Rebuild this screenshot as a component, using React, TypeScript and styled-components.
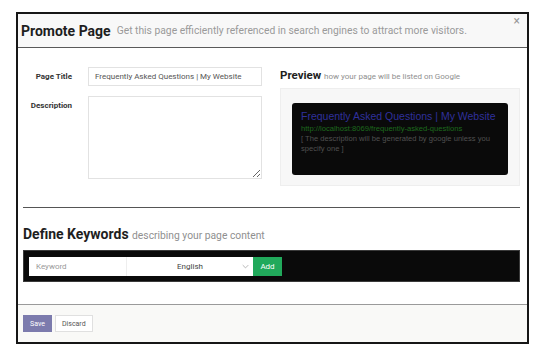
import { ReactElement } from 'react';
import styled, { createGlobalStyle } from 'styled-components';

const GlobalStyle = createGlobalStyle`
  body {
    margin: 0;
    background: #fff;
    font-family: Roboto, 'Liberation Sans', sans-serif;
  }
  #root {
    padding: 12px 0 0 16px;
  }
`;

function App(): ReactElement {
  return (
    <>
      <GlobalStyle />
      <Modal>
        <Header>
          <Title>Promote Page</Title>
          <Subtitle>Get this page efficiently referenced in search engines to attract more visitors.</Subtitle>
          <Close>×</Close>
        </Header>
        <Body>
          <TopSection>
            <FormColumn>
              <FieldRow>
                <Label>Page Title</Label>
                <TextInput defaultValue="Frequently Asked Questions | My Website" />
              </FieldRow>
              <FieldRow $top>
                <Label $top>Description</Label>
                <TextArea />
              </FieldRow>
            </FormColumn>
            <PreviewColumn>
              <SectionTitle $small>
                Preview <SectionHint $small>how your page will be listed on Google</SectionHint>
              </SectionTitle>
              <PreviewFrame>
                <SearchResult>
                  <ResultTitle>Frequently Asked Questions | My Website</ResultTitle>
                  <ResultUrl>http://localhost:8069/frequently-asked-questions</ResultUrl>
                  <ResultText>[ The description will be generated by google unless you specify one ]</ResultText>
                </SearchResult>
              </PreviewFrame>
            </PreviewColumn>
          </TopSection>
          <Rule />
          <SectionTitle>
            Define Keywords <SectionHint>describing your page content</SectionHint>
          </SectionTitle>
          <KeywordBar>
            <KeywordInput placeholder="Keyword" />
            <LangSelect>
              <span>English</span>
              <Chevron viewBox="0 0 10 6">
                <path d="M1 1l4 4 4-4" fill="none" stroke="#999" strokeWidth="1" />
              </Chevron>
            </LangSelect>
            <AddButton>Add</AddButton>
          </KeywordBar>
        </Body>
        <Footer>
          <Button $primary>Save</Button>
          <Button>Discard</Button>
        </Footer>
      </Modal>
    </>
  );
}

export default App;

const Modal = styled.div`
  width: 509px;
  height: 328px;
  border: 2px solid #161616;
  display: flex;
  flex-direction: column;
  position: relative;
  background: #fff;
`;

const Header = styled.div`
  height: 33px;
  flex-shrink: 0;
  display: flex;
  align-items: center;
  gap: 6px;
  padding-left: 3px;
  background: #f8f8f8;
  border-bottom: 1px solid #5a5a5a;
`;

const Title = styled.h1`
  margin: 0;
  font-size: 14px;
  font-weight: 700;
  color: #1e1e1e;
  line-height: 18px;
`;

const Subtitle = styled.span`
  font-size: 10.3px;
  color: #9a9a9a;
  line-height: 18px;
  padding-top: 1px;
`;

const Close = styled.span`
  position: absolute;
  top: 0;
  right: 7px;
  font-size: 12px;
  color: #999;
`;

const Body = styled.div`
  flex: 1;
  min-height: 0;
  padding: 19px 7px 0 5px;
`;

const TopSection = styled.div`
  display: flex;
  gap: 18px;
`;

const FormColumn = styled.div`
  width: 239px;
  display: flex;
  flex-direction: column;
  gap: 10px;
`;

const FieldRow = styled.div<{ $top?: boolean }>`
  display: flex;
  align-items: ${(p) => (p.$top ? 'flex-start' : 'center')};
  gap: 16px;
`;

const Label = styled.label<{ $top?: boolean }>`
  width: 49px;
  text-align: right;
  font-size: 8px;
  font-weight: 700;
  color: #333;
  padding-top: ${(p) => (p.$top ? '5px' : '0')};
`;

const TextInput = styled.input`
  box-sizing: border-box;
  width: 174px;
  height: 19px;
  border: 1px solid #e2e2e2;
  padding: 0 6px;
  font-family: Roboto, sans-serif;
  font-size: 8px;
  color: #555;
  outline: none;
`;

const TextArea = styled.textarea`
  box-sizing: border-box;
  width: 174px;
  height: 83px;
  border: 1px solid #e2e2e2;
  resize: vertical;
  outline: none;
`;

const PreviewColumn = styled.div`
  width: 240px;
  display: flex;
  flex-direction: column;
  padding-top: 1px;
`;

const SectionTitle = styled.h2<{ $small?: boolean }>`
  margin: 0;
  font-size: ${(p) => (p.$small ? '11.5px' : '14px')};
  font-weight: 700;
  color: #1e1e1e;
  line-height: ${(p) => (p.$small ? '14px' : '18px')};
  margin-bottom: ${(p) => (p.$small ? '4px' : '5px')};
`;

const SectionHint = styled.span<{ $small?: boolean }>`
  font-size: ${(p) => (p.$small ? '8px' : '10.3px')};
  font-weight: 400;
  color: #8f8f8f;
`;

const PreviewFrame = styled.div`
  height: 98px;
  box-sizing: border-box;
  background: #f7f7f7;
  border: 1px solid #eee;
  padding: 14px 11px 0;
`;

const SearchResult = styled.div`
  height: 72px;
  box-sizing: border-box;
  background: #0a0a0a;
  border-radius: 3px;
  padding: 7px 9px;
  font-family: 'Liberation Sans', Arial, sans-serif;
`;

const ResultTitle = styled.div`
  font-size: 10.5px;
  color: #30309c;
  line-height: 13px;
`;

const ResultUrl = styled.div`
  font-size: 7.6px;
  color: #1d6b1d;
  line-height: 10px;
  margin-top: 1px;
`;

const ResultText = styled.div`
  font-size: 7.6px;
  color: #505050;
  line-height: 10px;
`;

const Rule = styled.hr`
  margin: 21px 0 17px;
  border: 0;
  border-top: 1px solid #555;
`;

const KeywordBar = styled.div`
  height: 32px;
  box-sizing: border-box;
  display: flex;
  align-items: center;
  padding: 0 5px;
  background: #0a0a0a;
  border: 1px solid #3a3a3a;
`;

const KeywordInput = styled.input`
  box-sizing: border-box;
  width: 97px;
  height: 19px;
  border: 0;
  padding: 0 7px;
  font-family: Roboto, sans-serif;
  font-size: 8px;
  outline: none;
  &::placeholder {
    color: #999;
  }
`;

const LangSelect = styled.div`
  box-sizing: border-box;
  width: 127px;
  height: 19px;
  background: #fff;
  border-left: 1px solid #eee;
  display: flex;
  align-items: center;
  justify-content: center;
  position: relative;
  font-size: 8px;
  color: #444;
`;

const Chevron = styled.svg`
  position: absolute;
  right: 4px;
  top: 7px;
  width: 7px;
  height: 5px;
`;

const AddButton = styled.button`
  width: 29px;
  height: 19px;
  border: 0;
  padding: 0;
  background: #21a95b;
  color: #fff;
  font-family: Roboto, sans-serif;
  font-size: 8px;
`;

const Footer = styled.div`
  height: 37px;
  flex-shrink: 0;
  display: flex;
  align-items: center;
  gap: 3px;
  padding-left: 5px;
  background: #f9f9f7;
  border-top: 1px solid #9a9a9a;
`;

const Button = styled.button<{ $primary?: boolean }>`
  height: 17px;
  padding: 0 6px;
  border: 1px solid ${(p) => (p.$primary ? '#7c7bad' : '#e0e0e0')};
  background: ${(p) => (p.$primary ? '#7c7bad' : '#fff')};
  color: ${(p) => (p.$primary ? '#fff' : '#555')};
  font-family: Roboto, sans-serif;
  font-size: 7px;
`;
